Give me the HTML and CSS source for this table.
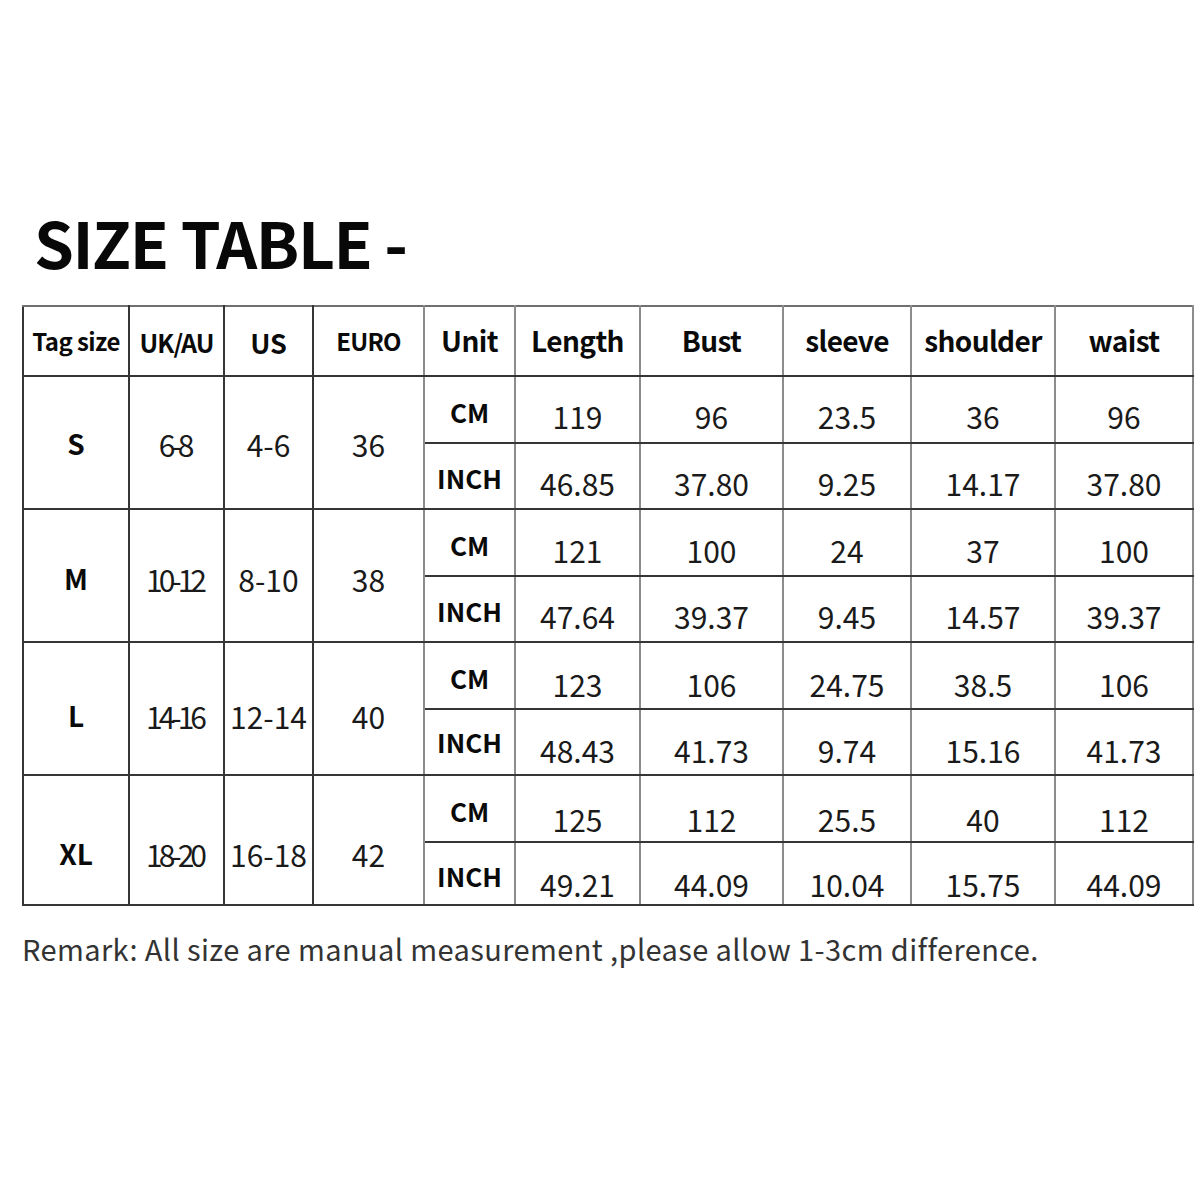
FILE: index.html
```html
<!DOCTYPE html>
<html>
<head>
<meta charset="utf-8">
<link rel="stylesheet" href="styles.css">
</head>
<body>
<div class="page">
  <h1 class="title">SIZE TABLE -</h1>
  <table class="size-table">
    <colgroup>
      <col class="c1"><col class="c2"><col class="c3"><col class="c4"><col class="c5">
      <col class="c6"><col class="c7"><col class="c8"><col class="c9"><col class="c10">
    </colgroup>
    <thead>
      <tr class="head">
        <th class="h-tag">Tag size</th>
        <th class="h-uk">UK/AU</th>
        <th class="h-us">US</th>
        <th class="h-euro edge">EURO</th>
        <th class="h-lg m">Unit</th>
        <th class="h-lg m">Length</th>
        <th class="h-lg m">Bust</th>
        <th class="h-lg m">sleeve</th>
        <th class="h-lg m">shoulder</th>
        <th class="h-lg m">waist</th>
      </tr>
    </thead>
    <tbody class="r-s">
      <tr class="sub-a">
        <td rowspan="2" class="tag">S</td>
        <td rowspan="2" class="val uk">6-8</td>
        <td rowspan="2" class="val">4-6</td>
        <td rowspan="2" class="val edge">36</td>
        <td class="unit m">CM</td>
        <td class="num m">119</td><td class="num m">96</td><td class="num m">23.5</td><td class="num m">36</td><td class="num m">96</td>
      </tr>
      <tr class="sub-b">
        <td class="unit m">INCH</td>
        <td class="num m">46.85</td><td class="num m">37.80</td><td class="num m">9.25</td><td class="num m">14.17</td><td class="num m">37.80</td>
      </tr>
    </tbody>
    <tbody class="r-m">
      <tr class="sub-a">
        <td rowspan="2" class="tag">M</td>
        <td rowspan="2" class="val uk">10-12</td>
        <td rowspan="2" class="val">8-10</td>
        <td rowspan="2" class="val edge">38</td>
        <td class="unit m">CM</td>
        <td class="num m">121</td><td class="num m">100</td><td class="num m">24</td><td class="num m">37</td><td class="num m">100</td>
      </tr>
      <tr class="sub-b">
        <td class="unit m">INCH</td>
        <td class="num m">47.64</td><td class="num m">39.37</td><td class="num m">9.45</td><td class="num m">14.57</td><td class="num m">39.37</td>
      </tr>
    </tbody>
    <tbody class="r-l">
      <tr class="sub-a">
        <td rowspan="2" class="tag">L</td>
        <td rowspan="2" class="val uk">14-16</td>
        <td rowspan="2" class="val">12-14</td>
        <td rowspan="2" class="val edge">40</td>
        <td class="unit m">CM</td>
        <td class="num m">123</td><td class="num m">106</td><td class="num m">24.75</td><td class="num m">38.5</td><td class="num m">106</td>
      </tr>
      <tr class="sub-b">
        <td class="unit m">INCH</td>
        <td class="num m">48.43</td><td class="num m">41.73</td><td class="num m">9.74</td><td class="num m">15.16</td><td class="num m">41.73</td>
      </tr>
    </tbody>
    <tbody class="r-xl">
      <tr class="sub-a">
        <td rowspan="2" class="tag">XL</td>
        <td rowspan="2" class="val uk">18-20</td>
        <td rowspan="2" class="val">16-18</td>
        <td rowspan="2" class="val edge">42</td>
        <td class="unit m">CM</td>
        <td class="num m">125</td><td class="num m">112</td><td class="num m">25.5</td><td class="num m">40</td><td class="num m">112</td>
      </tr>
      <tr class="sub-c">
        <td class="unit m">INCH</td>
        <td class="num m">49.21</td><td class="num m">44.09</td><td class="num m">10.04</td><td class="num m">15.75</td><td class="num m">44.09</td>
      </tr>
    </tbody>
  </table>
  <p class="remark">Remark: All size are manual measurement ,please allow 1-3cm difference.</p>
</div>
</body>
</html>
```
FILE: styles.css
```css
html, body {
  margin: 0;
  padding: 0;
  background: #ffffff;
}

.page {
  width: 1200px;
  height: 1200px;
  box-sizing: border-box;
  padding: 209px 0 0 22px;
  font-family: "Noto Sans CJK SC", "Noto Sans", sans-serif;
  color: #111;
}

.title {
  margin: 0 0 32px 12px;
  font-size: 64px;
  line-height: 1;
  font-weight: 700;
  letter-spacing: -1.5px;
  color: #080808;
}

.size-table {
  border-collapse: collapse;
  table-layout: fixed;
  width: 1171px;
  text-align: center;
}

.c1 { width: 106px; }
.c2 { width: 95px; }
.c3 { width: 89px; }
.c4 { width: 111px; }
.c5 { width: 91px; }
.c6 { width: 125px; }
.c7 { width: 143px; }
.c8 { width: 128px; }
.c9 { width: 144px; }
.c10 { width: 138px; }

th, td {
  padding: 0;
}

.size-table th,
.size-table td {
  border: 2px solid #363636;
  vertical-align: middle;
  white-space: nowrap;
  line-height: 1.2;
}

.size-table .m,
.size-table .edge {
  border-left-color: #8c8c8c;
  border-right-color: #8c8c8c;
}

.size-table thead th {
  border-top-color: #707070;
}

.head { height: 70px; }
.sub-a { height: 67px; }
.sub-b { height: 66px; }
.sub-c { height: 63px; }

.head th {
  font-weight: 700;
  color: #0a0a0a;
}

.h-tag { font-size: 24px; letter-spacing: -0.6px; }
.h-uk { font-size: 25px; letter-spacing: -1px; padding-top: 2px; }
.h-us { font-size: 27px; padding-top: 4px; }
.h-euro { font-size: 24px; letter-spacing: -0.8px; }
.h-lg { font-size: 28px; letter-spacing: -0.6px; }

.tag {
  font-size: 28px;
  font-weight: 700;
  color: #0a0a0a;
}

.val {
  font-size: 30px;
  font-weight: 400;
  color: #1a1a1a;
}

.val.uk { letter-spacing: -4px; padding-right: 4px; }

.unit {
  font-size: 26px;
  font-weight: 700;
  color: #0a0a0a;
  padding-top: 4px;
}

.num {
  font-size: 30px;
  font-weight: 400;
  color: #1a1a1a;
  padding-top: 13px;
}

.r-s .tag, .r-s .val { padding-top: 2px; }
.r-m .tag, .r-m .val { padding-top: 7px; }
.r-l .tag, .r-l .val { padding-top: 15px; }
.r-xl .tag, .r-xl .val { padding-top: 28px; }
.r-m .num { padding-top: 14px; }
.r-l .num { padding-top: 16px; }
.r-xl .num { padding-top: 20px; }
.r-l .sub-b .unit { padding-top: 0; }

.remark {
  margin: 28px 0 0 0;
  font-size: 29px;
  line-height: 1;
  color: #333;
  letter-spacing: 0.4px;
}
```
